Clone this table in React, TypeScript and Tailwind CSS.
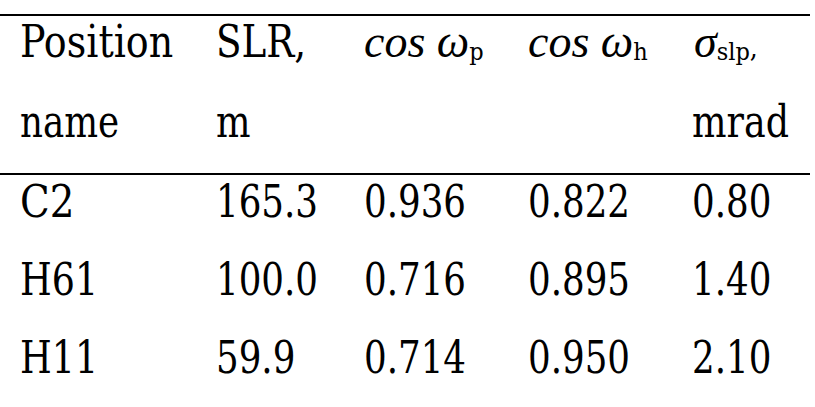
import React from "react";

const serif: React.CSSProperties = {
  fontFamily: '"DejaVu Serif Condensed", "DejaVu Serif", serif',
};
const times: React.CSSProperties = { fontFamily: '"Liberation Serif", serif' };

function Sub({ children }: { children: React.ReactNode }) {
  return (
    <span className="relative top-[3px] text-[25px]" style={serif}>
      {children}
    </span>
  );
}

type Cell = React.ReactNode | { t: string; s: number };

function Row({ cells, className }: { cells: Cell[]; className?: string }) {
  return (
    <div className={"grid grid-cols-[196px_148px_164px_164px_118px] h-[44px] leading-[44px] " + (className ?? "")}>
      {cells.map((c, i) => {
        if (c && typeof c === "object" && "t" in (c as any)) {
          const cc = c as { t: string; s: number };
          return (
            <div key={i} className="whitespace-nowrap">
              <span className="inline-block origin-left" style={{ transform: `scaleX(${cc.s})` }}>
                {cc.t}
              </span>
            </div>
          );
        }
        return (
          <div key={i} className="whitespace-nowrap">
            {c as React.ReactNode}
          </div>
        );
      })}
    </div>
  );
}

const d = (t: string) => ({ t, s: 0.9 });

export default function App() {
  return (
    <div className="w-[815px] h-[407px] bg-white pt-[14px] overflow-hidden text-black">
      <div className="w-[810px] text-[44px]" style={serif}>
        <div className="border-t-2 border-b-2 border-black pl-[20px] pt-[4px] pb-[29px]">
          <Row
            className="mb-[36px]"
            cells={[
              { t: "Position", s: 0.96 },
              { t: "SLR,", s: 0.94 },
              <span>
                <span className="italic text-[46px]" style={times}>cos ω</span>
                <Sub>p</Sub>
              </span>,
              <span>
                <span className="italic text-[46px]" style={times}>cos ω</span>
                <Sub>h</Sub>
              </span>,
              <span className="pl-[2px]">
                <span className="italic text-[46px]" style={times}>σ</span>
                <Sub>slp</Sub>
                <span className="text-[28px]" style={serif}>,</span>
              </span>,
            ]}
          />
          <Row cells={[{ t: "name", s: 0.9 }, { t: "m", s: 0.92 }, "", "", { t: "mrad", s: 0.92 }]} />
        </div>
        <div className="pl-[20px] pt-[5px] flex flex-col gap-[34px]">
          <Row cells={[{ t: "C2", s: 0.98 }, d("165.3"), d("0.936"), d("0.822"), d("0.80")]} />
          <Row cells={[{ t: "H61", s: 0.92 }, d("100.0"), d("0.716"), d("0.895"), d("1.40")]} />
          <Row cells={[{ t: "H11", s: 0.92 }, d("59.9"), d("0.714"), d("0.950"), d("2.10")]} />
        </div>
      </div>
    </div>
  );
}
